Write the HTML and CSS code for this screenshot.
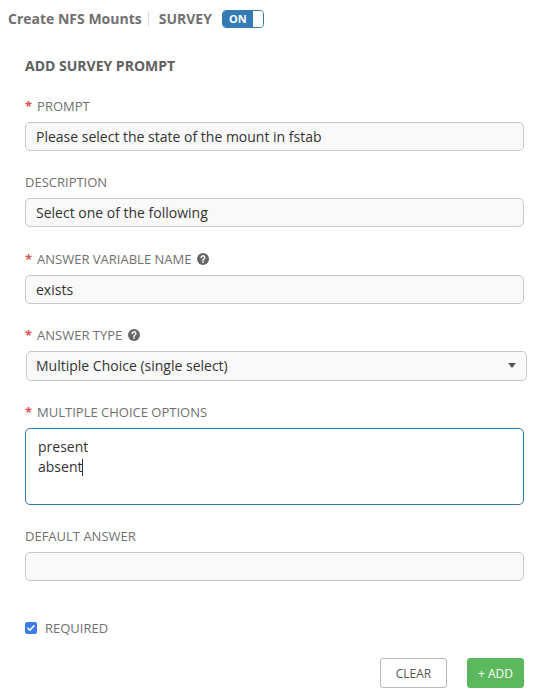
FILE: index.html
```html
<!DOCTYPE html>
<html>
<head>
<meta charset="utf-8">
<link rel="stylesheet" href="styles.css">
</head>
<body>
<div class="header">
  <span class="title">Create NFS Mounts</span>
  <span class="sep"></span>
  <span class="title">SURVEY</span>
  <span class="toggle"><span class="toggle-on">ON</span><span class="toggle-knob"></span></span>
</div>
<div class="form">
  <div class="heading">ADD SURVEY PROMPT</div>

  <div class="group">
    <div class="label"><span class="req">*</span>PROMPT</div>
    <div class="input">Please select the state of the mount in fstab</div>
  </div>

  <div class="group">
    <div class="label">DESCRIPTION</div>
    <div class="input">Select one of the following</div>
  </div>

  <div class="group">
    <div class="label"><span class="req">*</span>ANSWER VARIABLE NAME <svg class="help" viewBox="0 0 12 12"><circle cx="6" cy="6" r="6" fill="#666"/><path d="M4.2 4.6a1.8 1.7 0 1 1 2.6 1.5c-.6.3-.8.6-.8 1.2v.3" fill="none" stroke="#fff" stroke-width="1.5" stroke-linecap="round"/><circle cx="6" cy="9.1" r=".9" fill="#fff"/></svg></div>
    <div class="input">exists</div>
  </div>

  <div class="group">
    <div class="label"><span class="req">*</span>ANSWER TYPE <svg class="help" viewBox="0 0 12 12"><circle cx="6" cy="6" r="6" fill="#666"/><path d="M4.2 4.6a1.8 1.7 0 1 1 2.6 1.5c-.6.3-.8.6-.8 1.2v.3" fill="none" stroke="#fff" stroke-width="1.5" stroke-linecap="round"/><circle cx="6" cy="9.1" r=".9" fill="#fff"/></svg></div>
    <div class="select"><span>Multiple Choice (single select)</span><span class="caret"></span></div>
  </div>

  <div class="group">
    <div class="label"><span class="req">*</span>MULTIPLE CHOICE OPTIONS</div>
    <div class="textarea">present<br>absent<span class="cursor"></span></div>
  </div>

  <div class="group">
    <div class="label">DEFAULT ANSWER</div>
    <div class="input"></div>
  </div>

  <div class="check-row">
    <span class="checkbox"><svg viewBox="0 0 12 12"><path d="M3 6.2l2 2 4-4.4" fill="none" stroke="#fff" stroke-width="1.6" stroke-linecap="round" stroke-linejoin="round"/></svg></span>
    <span class="check-label">REQUIRED</span>
  </div>

  <div class="actions">
    <button class="btn btn-clear">CLEAR</button>
    <button class="btn btn-add">+ ADD</button>
  </div>
</div>
</body>
</html>
```

FILE: styles.css
```css
* { box-sizing: border-box; }
body {
  margin: 0;
  font-family: "Open Sans", "Noto Sans", sans-serif;
  color: #333;
  background: #fff;
}
.header {
  display: flex;
  align-items: center;
  height: 18px;
  margin-top: 10px;
  padding-left: 8px;
}
.title {
  font-size: 14px;
  font-weight: 700;
  color: #707070;
  line-height: 18px;
}
.sep {
  width: 1px;
  height: 14px;
  background: #d7d7d7;
  margin: 0 10px 0 6px;
}
.toggle {
  display: flex;
  margin-left: 10px;
  width: 42px;
  height: 18px;
  border: 1px solid #337ab7;
  border-radius: 4px;
  overflow: hidden;
}
.toggle-on {
  width: 30px;
  background: #337ab7;
  color: #fff;
  font-size: 11px;
  font-weight: 700;
  line-height: 16px;
  text-align: center;
}
.toggle-knob {
  flex: 1;
  background: #fff;
}
.form {
  padding: 30px 23px 0 25px;
}
.heading {
  font-size: 14px;
  font-weight: 700;
  color: #606060;
  line-height: 16px;
  margin-bottom: 24px;
}
.group {
  margin-bottom: 23.25px;
}
.label {
  display: flex;
  align-items: center;
  height: 16px;
  font-size: 13px;
  color: #707070;
  line-height: 16px;
  margin-bottom: 8px;
}
.req {
  color: #d9534f;
  font-weight: 700;
  font-size: 13px;
  margin-right: 5px;
  line-height: 12px;
}
.help {
  width: 12px;
  height: 12px;
  margin-left: 6px;
}
.input {
  height: 29px;
  border: 1px solid #c8c8c8;
  border-radius: 5px;
  background: #f9f9f9;
  padding: 0 10px;
  font-size: 14px;
  line-height: 27px;
  color: #333;
}
.select {
  display: flex;
  align-items: center;
  justify-content: space-between;
  height: 30px;
  margin-left: 1px;
  margin-right: -3px;
  border: 1px solid #c8c8c8;
  border-radius: 5px;
  background: #f9f9f9;
  padding: 0 10px 0 9px;
  font-size: 14px;
  color: #333;
}
.caret {
  width: 0;
  height: 0;
  border-left: 4px solid transparent;
  border-right: 4px solid transparent;
  border-top: 5px solid #555;
}
.textarea {
  height: 77px;
  border: 1px solid #337ab7;
  border-radius: 5px;
  background: #fff;
  padding: 8px 12px;
  font-size: 14px;
  line-height: 20px;
  color: #333;
}
.cursor {
  display: inline-block;
  width: 1px;
  height: 17px;
  background: #333;
  vertical-align: -4px;
}
.check-row {
  display: flex;
  align-items: center;
  margin-top: 38px;
}
.checkbox {
  width: 12px;
  height: 12px;
  border-radius: 2px;
  background: #3b7de8;
  display: flex;
}
.checkbox svg { width: 12px; height: 12px; }
.check-label {
  margin-left: 8px;
  font-size: 13px;
  color: #707070;
}
.actions {
  display: flex;
  justify-content: flex-end;
  gap: 20px;
  margin-top: 21px;
}
.btn {
  height: 30px;
  border-radius: 3px;
  font-family: "Open Sans", "Noto Sans", sans-serif;
  font-size: 12px;
  padding: 0;
}
.btn-clear {
  width: 67px;
  border: 1px solid #b8b8b8;
  background: #fff;
  color: #555;
}
.btn-add {
  width: 57px;
  border: 1px solid #5cb85c;
  background: #5cb85c;
  color: #fff;
}
```
